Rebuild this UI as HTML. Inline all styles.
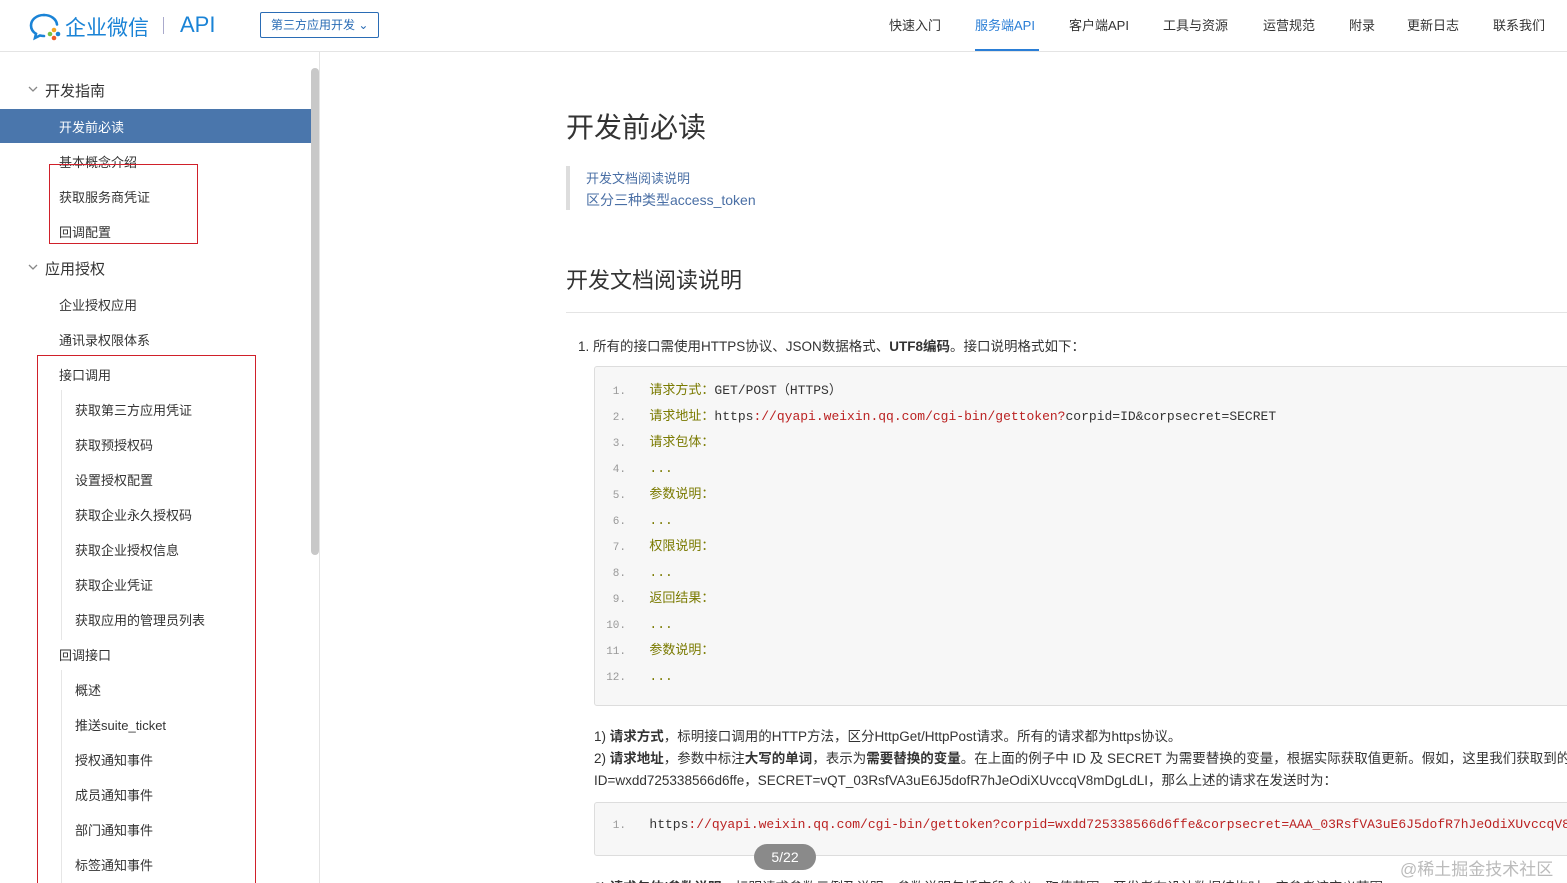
<!DOCTYPE html>
<html style="overflow:hidden;height:883px"><head><meta charset="utf-8"><style>
*{margin:0;padding:0;box-sizing:border-box}
body{width:1567px;height:883px;overflow:hidden;position:relative;background:#fff;font-family:"Liberation Sans","Noto Sans CJK SC",sans-serif;color:#333}
.a{position:absolute;white-space:nowrap}
.nav{font-size:13px;color:#333;top:15px}
.sb{font-size:13px;color:#333}
.code{font-family:"Liberation Mono","Noto Sans CJK SC",monospace;font-size:13px}
.code>div{height:26px;line-height:26px;overflow:hidden}
.ln{color:#999;font-size:11px;width:24px;text-align:right;display:inline-block}
.k{color:#7a7a00}
.s{color:#b22}
</style></head><body>
<div class="a" style="left:0;top:51px;width:1567px;height:1px;background:#e4e4e4"></div>
<svg class="a" style="left:28px;top:12px" width="36" height="30" viewBox="0 0 36 30">
<path d="M16 3C8 3 3 8 3 13.5c0 3.5 2 6.5 5 8.3L7 26l5-2.5c1.3.3 2.6.5 4 .5" fill="none" stroke="#1a83d6" stroke-width="2.6" stroke-linecap="round"/>
<path d="M16 3c7 0 12.5 4.3 13 9.5" fill="none" stroke="#1a83d6" stroke-width="2.6" stroke-linecap="round"/>
<circle cx="26" cy="18" r="2.3" fill="#f5a623"/><circle cx="30" cy="22" r="2.3" fill="#1a83d6"/><circle cx="26" cy="26" r="2.3" fill="#f05a28"/><circle cx="22" cy="22" r="2.3" fill="#7bc043"/></svg>
<div class="a" style="left:65px;top:12px;font-size:21px;color:#1a83d6">企业微信</div>
<div class="a" style="left:163px;top:17px;width:1px;height:17px;background:#aac"></div>
<div class="a" style="left:180px;top:12px;font-size:22px;color:#1a83d6">API</div>
<div class="a" style="left:260px;top:12px;width:119px;height:26px;border:1px solid #2a6cb5;border-radius:2px;font-size:12px;color:#2a6cb5;line-height:24px;padding-left:10px">第三方应用开发 ⌄</div>
<div class="a nav" style="left:889px">快速入门</div>
<div class="a nav" style="left:975px;color:#2a7ed6">服务端API</div>
<div class="a" style="left:975px;top:49px;width:64px;height:2px;background:#2a7ed6"></div>
<div class="a nav" style="left:1069px">客户端API</div>
<div class="a nav" style="left:1163px">工具与资源</div>
<div class="a nav" style="left:1263px">运营规范</div>
<div class="a nav" style="left:1349px">附录</div>
<div class="a nav" style="left:1407px">更新日志</div>
<div class="a nav" style="left:1493px">联系我们</div>
<div class="a" style="left:319px;top:52px;width:1px;height:831px;background:#e4e4e4"></div>
<div class="a" style="left:311px;top:68px;width:8px;height:487px;background:#c8c8c8;border-radius:4px"></div>
<div class="a" style="left:0;top:109px;width:311px;height:34px;background:#4a76ac"></div>
<svg class="a" style="left:28px;top:86px" width="10" height="7" viewBox="0 0 10 7"><path d="M1 1l4 4 4-4" fill="none" stroke="#888" stroke-width="1.3"/></svg>
<div class="a" style="left:45px;top:80px;font-size:15px;color:#333">开发指南</div>
<div class="a sb" style="left:59px;top:117px;color:#fff">开发前必读</div>
<div class="a sb" style="left:59px;top:152px">基本概念介绍</div>
<div class="a sb" style="left:59px;top:187px">获取服务商凭证</div>
<div class="a sb" style="left:59px;top:222px">回调配置</div>
<svg class="a" style="left:28px;top:264px" width="10" height="7" viewBox="0 0 10 7"><path d="M1 1l4 4 4-4" fill="none" stroke="#888" stroke-width="1.3"/></svg>
<div class="a" style="left:45px;top:258px;font-size:15px;color:#333">应用授权</div>
<div class="a sb" style="left:59px;top:295px">企业授权应用</div>
<div class="a sb" style="left:59px;top:330px">通讯录权限体系</div>
<div class="a sb" style="left:59px;top:365px">接口调用</div>
<div class="a sb" style="left:75px;top:400px">获取第三方应用凭证</div>
<div class="a sb" style="left:75px;top:435px">获取预授权码</div>
<div class="a sb" style="left:75px;top:470px">设置授权配置</div>
<div class="a sb" style="left:75px;top:505px">获取企业永久授权码</div>
<div class="a sb" style="left:75px;top:540px">获取企业授权信息</div>
<div class="a sb" style="left:75px;top:575px">获取企业凭证</div>
<div class="a sb" style="left:75px;top:610px">获取应用的管理员列表</div>
<div class="a sb" style="left:59px;top:645px">回调接口</div>
<div class="a sb" style="left:75px;top:680px">概述</div>
<div class="a sb" style="left:75px;top:715px">推送suite_ticket</div>
<div class="a sb" style="left:75px;top:750px">授权通知事件</div>
<div class="a sb" style="left:75px;top:785px">成员通知事件</div>
<div class="a sb" style="left:75px;top:820px">部门通知事件</div>
<div class="a sb" style="left:75px;top:855px">标签通知事件</div>
<div class="a" style="left:61px;top:390px;width:1px;height:250px;background:#e6e6e6"></div>
<div class="a" style="left:61px;top:670px;width:1px;height:213px;background:#e6e6e6"></div>
<div class="a" style="left:49px;top:164px;width:149px;height:80px;border:1px solid #d0202a"></div>
<div class="a" style="left:37px;top:355px;width:219px;height:528px;border:1px solid #d0202a;border-bottom:none"></div>
<div class="a" style="left:566px;top:106px;font-size:28px;color:#333">开发前必读</div>
<div class="a" style="left:566px;top:166px;width:4px;height:44px;background:#ddd"></div>
<div class="a" style="left:586px;top:168px;font-size:13px;color:#4a6fa5">开发文档阅读说明</div>
<div class="a" style="left:586px;top:190px;font-size:14px;color:#4a6fa5">区分三种类型access_token</div>
<div class="a" style="left:566px;top:263px;font-size:22px;color:#333">开发文档阅读说明</div>
<div class="a" style="left:566px;top:312px;width:1001px;height:1px;background:#e4e4e4"></div>
<div class="a" style="left:578px;top:335px;font-size:13.5px;color:#333">1. 所有的接口需使用HTTPS协议、JSON数据格式、<b>UTF8编码</b>。接口说明格式如下：</div>
<div class="a" style="left:594px;top:366px;width:990px;height:340px;background:#f7f7f7;border:1px solid #ddd;border-radius:3px"></div>
<div class="a code" style="left:602px;top:378px">
<div><span class="ln">1.</span>&nbsp;&nbsp;&nbsp;<span class="k">请求方式：</span>GET/POST（HTTPS）</div>
<div><span class="ln">2.</span>&nbsp;&nbsp;&nbsp;<span class="k">请求地址：</span>https<span class="s">://qyapi.weixin.qq.com/cgi-bin/gettoken?</span>corpid=ID&amp;corpsecret=SECRET</div>
<div><span class="ln">3.</span>&nbsp;&nbsp;&nbsp;<span class="k">请求包体：</span></div>
<div><span class="ln">4.</span>&nbsp;&nbsp;&nbsp;<span class="k">...</span></div>
<div><span class="ln">5.</span>&nbsp;&nbsp;&nbsp;<span class="k">参数说明：</span></div>
<div><span class="ln">6.</span>&nbsp;&nbsp;&nbsp;<span class="k">...</span></div>
<div><span class="ln">7.</span>&nbsp;&nbsp;&nbsp;<span class="k">权限说明：</span></div>
<div><span class="ln">8.</span>&nbsp;&nbsp;&nbsp;<span class="k">...</span></div>
<div><span class="ln">9.</span>&nbsp;&nbsp;&nbsp;<span class="k">返回结果：</span></div>
<div><span class="ln">10.</span>&nbsp;&nbsp;&nbsp;<span class="k">...</span></div>
<div><span class="ln">11.</span>&nbsp;&nbsp;&nbsp;<span class="k">参数说明：</span></div>
<div><span class="ln">12.</span>&nbsp;&nbsp;&nbsp;<span class="k">...</span></div>
</div>
<div class="a" style="left:594px;top:726px;font-size:13.5px;line-height:22px;color:#333">1) <b>请求方式</b>，标明接口调用的HTTP方法，区分HttpGet/HttpPost请求。所有的请求都为https协议。<br>2) <b>请求地址</b>，参数中标注<b>大写的单词</b>，表示为<b>需要替换的变量</b>。在上面的例子中 ID 及 SECRET 为需要替换的变量，根据实际获取值更新。假如，这里我们获取到的企业<br>ID=wxdd725338566d6ffe，SECRET=vQT_03RsfVA3uE6J5dofR7hJeOdiXUvccqV8mDgLdLI，那么上述的请求在发送时为：</div>
<div class="a" style="left:594px;top:802px;width:990px;height:54px;background:#f7f7f7;border:1px solid #ddd;border-radius:3px"></div>
<div class="a code" style="left:602px;top:816px;line-height:18px"><span class="ln">1.</span>&nbsp;&nbsp;&nbsp;https<span class="s">://qyapi.weixin.qq.com/cgi-bin/gettoken?corpid=wxdd725338566d6ffe&amp;corpsecret=AAA_03RsfVA3uE6J5dofR7hJeOdiXUvccqV8mDgLdLI</span></div>
<div class="a" style="left:594px;top:876px;font-size:13.5px;color:#333">3) <b>请求包体/参数说明</b>，标明请求参数示例及说明，参数说明包括字段含义、取值范围，开发者在设计数据结构时，应参考该定义范围。</div>
<div class="a" style="left:754px;top:844px;width:62px;height:26px;border-radius:13px;background:#8a8a8a;color:#fff;font-size:14px;text-align:center;line-height:26px">5/22</div>
<div class="a" style="left:1400px;top:855px;font-size:17px;color:#bbb">@稀土掘金技术社区</div>
</body></html>
